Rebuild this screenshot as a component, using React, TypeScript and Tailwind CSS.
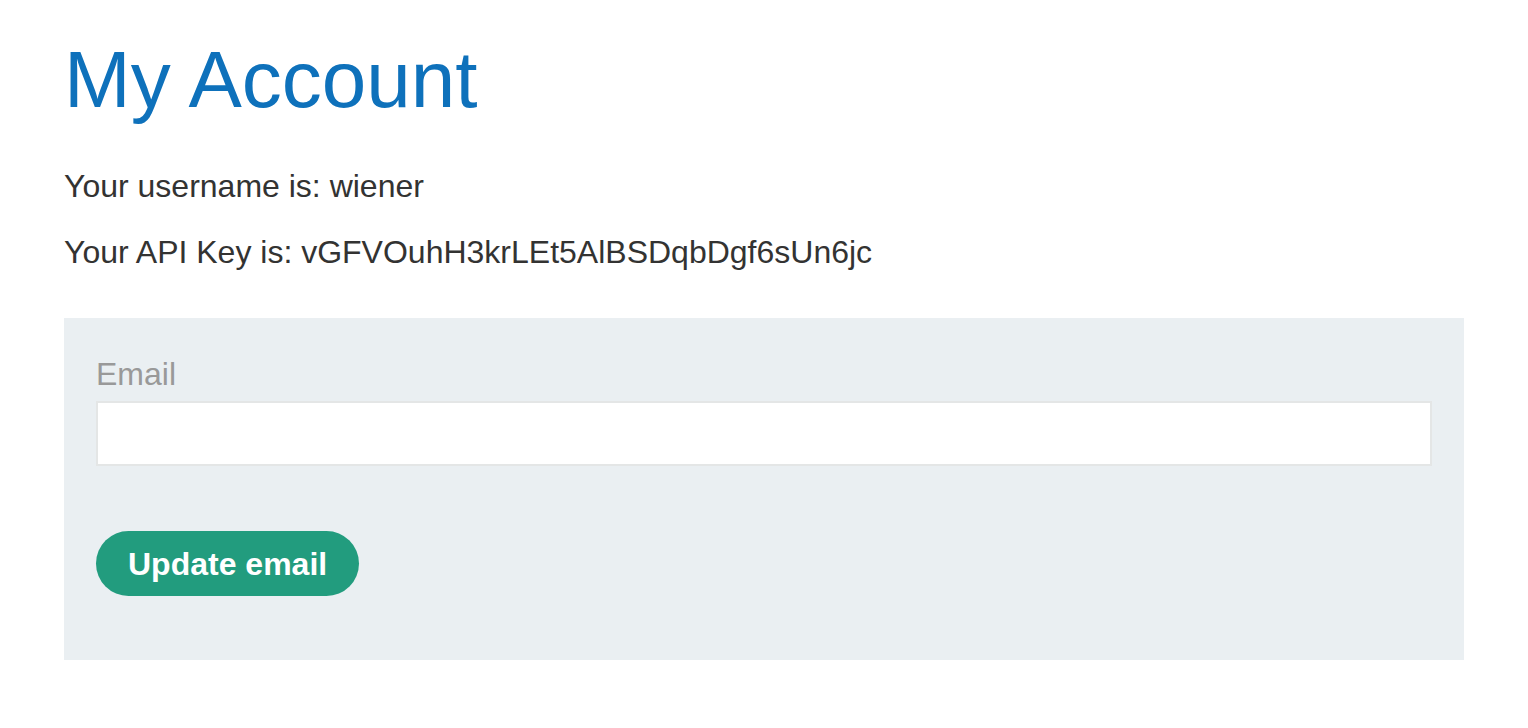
import React from 'react';

const App: React.FC = () => {
  return (
    <div
      className="min-h-screen bg-white px-16 pt-[34px] text-[#333332]"
      style={{ fontFamily: '"Liberation Sans", Arial, sans-serif' }}
    >
      <h1 className="text-[80px] leading-[92px] font-normal text-[#0e71bb]">My Account</h1>

      <p className="mt-[42px] text-[32px] leading-[37px]">Your username is: wiener</p>
      <p className="mt-[29px] text-[32px] leading-[37px]">Your API Key is: vGFVOuhH3krLEt5AlBSDqbDgf6sUn6jc</p>

      {/* Update email form */}
      <form className="mt-[47px] bg-[#eaeff2] px-8 pt-[38px] pb-16" onSubmit={(e) => e.preventDefault()}>
        <label className="block text-[32px] leading-[37px] text-[#999999]">Email</label>
        <input
          type="email"
          className="mt-2 block h-[65px] w-full border-2 border-[#e4e6e6] bg-white px-3 text-[32px] outline-none"
        />
        <button
          type="submit"
          className="mt-[65px] h-[65px] rounded-full bg-[#229c7e] px-8 text-[32px] font-bold text-white"
        >
          Update email
        </button>
      </form>
    </div>
  );
};

export default App;
